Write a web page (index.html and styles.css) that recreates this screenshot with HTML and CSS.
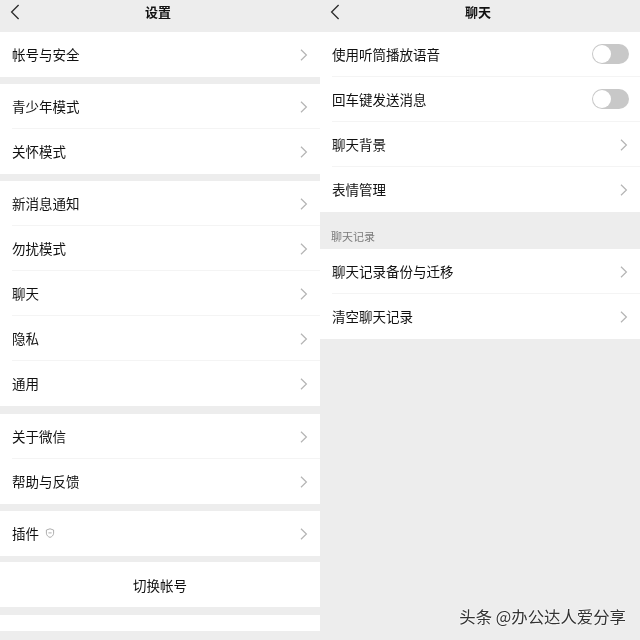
FILE: index.html
```html
<!DOCTYPE html>
<html lang="zh">
<head>
<meta charset="utf-8">
<title>设置 聊天</title>
<link rel="stylesheet" href="styles.css">
</head>
<body>
<svg class="defs" width="0" height="0" aria-hidden="true">
  <symbol id="chev" viewBox="0 0 8 12"><path d="M1 .8 6.4 6 1 11.2" fill="none" stroke="#b4b4b4" stroke-width="1.2"/></symbol>
  <symbol id="back" viewBox="0 0 10 16"><path d="M8.6 1 1.6 8l7 7" fill="none" stroke="#2a2a2a" stroke-width="1.3"/></symbol>
</svg>
<main class="screen">
  <section class="panel">
    <header class="bar"><svg class="back"><use href="#back"/></svg><h1>设置</h1></header>
    <div class="group g1"><div class="row"><span>帐号与安全</span><svg class="chev"><use href="#chev"/></svg></div></div>
    <div class="group g2">
      <div class="row"><span>青少年模式</span><svg class="chev"><use href="#chev"/></svg></div>
      <div class="row"><span>关怀模式</span><svg class="chev"><use href="#chev"/></svg></div>
    </div>
    <div class="group g3">
      <div class="row"><span>新消息通知</span><svg class="chev"><use href="#chev"/></svg></div>
      <div class="row"><span>勿扰模式</span><svg class="chev"><use href="#chev"/></svg></div>
      <div class="row"><span>聊天</span><svg class="chev"><use href="#chev"/></svg></div>
      <div class="row"><span>隐私</span><svg class="chev"><use href="#chev"/></svg></div>
      <div class="row"><span>通用</span><svg class="chev"><use href="#chev"/></svg></div>
    </div>
    <div class="group g4">
      <div class="row"><span>关于微信</span><svg class="chev"><use href="#chev"/></svg></div>
      <div class="row"><span>帮助与反馈</span><svg class="chev"><use href="#chev"/></svg></div>
    </div>
    <div class="group g5">
      <div class="row">
        <span class="with-icon">插件
          <svg class="shield" viewBox="0 0 10 10"><path d="M5 .8 8.6 2v3.2C8.6 7.4 6.8 8.8 5 9.4 3.2 8.8 1.4 7.4 1.4 5.2V2Z" fill="none" stroke="#a5a5a5" stroke-width=".9"/><path d="M3.4 4.9h3.2" stroke="#a5a5a5" stroke-width=".9"/></svg>
        </span>
        <svg class="chev"><use href="#chev"/></svg>
      </div>
    </div>
    <div class="group g6"><div class="row center">切换帐号</div></div>
    <div class="group g7"></div>
  </section>
  <section class="panel">
    <header class="bar"><svg class="back"><use href="#back"/></svg><h1>聊天</h1></header>
    <div class="group g1">
      <div class="row"><span>使用听筒播放语音</span><i class="toggle"></i></div>
      <div class="row"><span>回车键发送消息</span><i class="toggle"></i></div>
      <div class="row"><span>聊天背景</span><svg class="chev"><use href="#chev"/></svg></div>
      <div class="row"><span>表情管理</span><svg class="chev"><use href="#chev"/></svg></div>
    </div>
    <h2 class="label">聊天记录</h2>
    <div class="group">
      <div class="row"><span>聊天记录备份与迁移</span><svg class="chev"><use href="#chev"/></svg></div>
      <div class="row"><span>清空聊天记录</span><svg class="chev"><use href="#chev"/></svg></div>
    </div>
    <p class="mark">头条 @办公达人爱分享</p>
  </section>
</main>
</body>
</html>
```
FILE: styles.css
```css
* { box-sizing: border-box; }
html, body { margin: 0; height: 100%; }
body { background: #ededed; font-family: "Noto Sans CJK SC", "Noto Sans", sans-serif; color: #111; }
.defs { position: absolute; }
.screen { display: flex; width: 640px; height: 640px; overflow: hidden; filter: blur(.3px); }
.panel { position: relative; width: 320px; flex: none; background: #ededed; }
.bar { position: relative; height: 32px; display: flex; align-items: center; justify-content: center; padding: 0 4px 9px 0; }
.bar h1 { margin: 0; font-size: 13px; font-weight: 700; line-height: 18px; }
.back { position: absolute; left: 10px; top: 4px; width: 10px; height: 16px; }
.group { background: #fff; }
.g2 { margin-top: 7px; }
.g3 { margin-top: 7px; }
.g4 { margin-top: 8px; }
.g5 { margin-top: 7px; }
.g6 { margin-top: 6px; }
.g7 { margin-top: 8px; height: 16px; }
.row { position: relative; height: 45px; display: flex; align-items: center; justify-content: space-between; padding: 0 12px; font-size: 13.5px; line-height: 20px; }
.row > span { padding-bottom: 2px; }
.row + .row::before { content: ""; position: absolute; left: 12px; right: 0; top: -1px; height: 1px; background: #f4f4f4; }
.row.center { justify-content: center; }
.chev { width: 8px; height: 12px; flex: none; margin-right: 0; }
.with-icon { display: flex; align-items: center; gap: 6px; }
.shield { width: 10px; height: 10px; }
.toggle { position: relative; display: block; width: 37px; height: 20px; margin: 0 -1px 1px 0; border-radius: 10px; background: #c8c8c8; }
.toggle::after { content: ""; position: absolute; left: 1px; top: 1px; width: 18px; height: 18px; border-radius: 50%; background: #fff; }
.label { margin: 0; height: 37px; padding: 16px 0 0 11px; font-size: 11px; font-weight: 400; line-height: 16px; color: #7b7b7b; }
.mark { position: absolute; right: 14px; top: 605px; margin: 0; font-size: 16.4px; line-height: 22px; color: #333; text-shadow: 0 0 2px #fff, 0 0 2px #fff; white-space: nowrap; }
```
